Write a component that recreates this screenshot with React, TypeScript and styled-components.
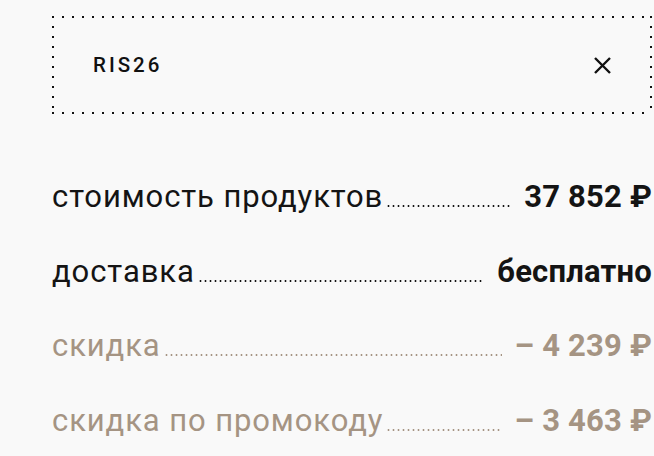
import React from 'react';
import styled, { createGlobalStyle } from 'styled-components';

const GlobalStyle = createGlobalStyle`
    html, body {
        margin: 0;
        padding: 0;
        background: #f9f9f9;
    }
    body {
        font-family: Roboto, 'Liberation Sans', sans-serif;
        color: #141414;
    }
`;

const Page = styled.div`
    width: 600px;
    padding: 16px 0 0 52px;
`;

// promo field with a sparse dotted frame (2px dots every 10px)
const PromoBox = styled.div`
    height: 98px;
    box-sizing: border-box;
    display: flex;
    align-items: center;
    justify-content: space-between;
    padding: 0 40px 0 41px;
    background:
        linear-gradient(to right, #111 2px, transparent 2px) top left / 10px 2px repeat-x,
        linear-gradient(to right, #111 2px, transparent 2px) bottom left / 10px 2px repeat-x,
        linear-gradient(to bottom, #111 2px, transparent 2px) top left / 2px 10px repeat-y,
        linear-gradient(to bottom, #111 2px, transparent 2px) top right / 2px 10px repeat-y;
`;

const PromoCode = styled.span`
    font-size: 20.5px;
    font-weight: 500;
    letter-spacing: 3px;
    color: #111;
`;

const ClearButton = styled.button`
    border: 0;
    padding: 0;
    background: none;
    width: 19px;
    height: 19px;
    display: flex;
    align-items: center;
    justify-content: center;
    cursor: pointer;
`;

const Summary = styled.div`
    margin-top: 65px;
    display: flex;
    flex-direction: column;
    gap: 38.5px;
`;

const Row = styled.div<{ $accent?: boolean }>`
    display: flex;
    align-items: baseline;
    font-size: 31px;
    line-height: 36px;
    color: ${p => (p.$accent ? '#a59483' : '#141414')};
`;

const Label = styled.span`
    white-space: nowrap;
    letter-spacing: 0.9px;
`;

const Leader = styled.span`
    flex: 1;
    align-self: baseline;
    height: 2px;
    margin: 0 13px -2px 3px;
    background: radial-gradient(circle, currentColor 0.9px, transparent 1.2px) left center / 5px 2px repeat-x;
`;

const Value = styled.span`
    font-weight: 700;
    letter-spacing: 0.2px;
    white-space: nowrap;
`;

const lines = [
    { label: 'стоимость продуктов', value: '37 852 ₽' },
    { label: 'доставка', value: 'бесплатно' },
    { label: 'скидка', value: '– 4 239 ₽', accent: true },
    { label: 'скидка по промокоду', value: '– 3 463 ₽', accent: true },
];

export default function App() {
    return (
        <Page>
            <GlobalStyle />
            <PromoBox>
                <PromoCode>RIS26</PromoCode>
                <ClearButton aria-label="удалить промокод">
                    <svg width="19" height="19" viewBox="0 0 19 19">
                        <path d="M2 2 L17 17 M17 2 L2 17" stroke="#111" strokeWidth="2.4" fill="none" />
                    </svg>
                </ClearButton>
            </PromoBox>
            <Summary>
                {lines.map(line => (
                    <Row key={line.label} $accent={line.accent}>
                        <Label>{line.label}</Label>
                        <Leader />
                        <Value>{line.value}</Value>
                    </Row>
                ))}
            </Summary>
        </Page>
    );
}
